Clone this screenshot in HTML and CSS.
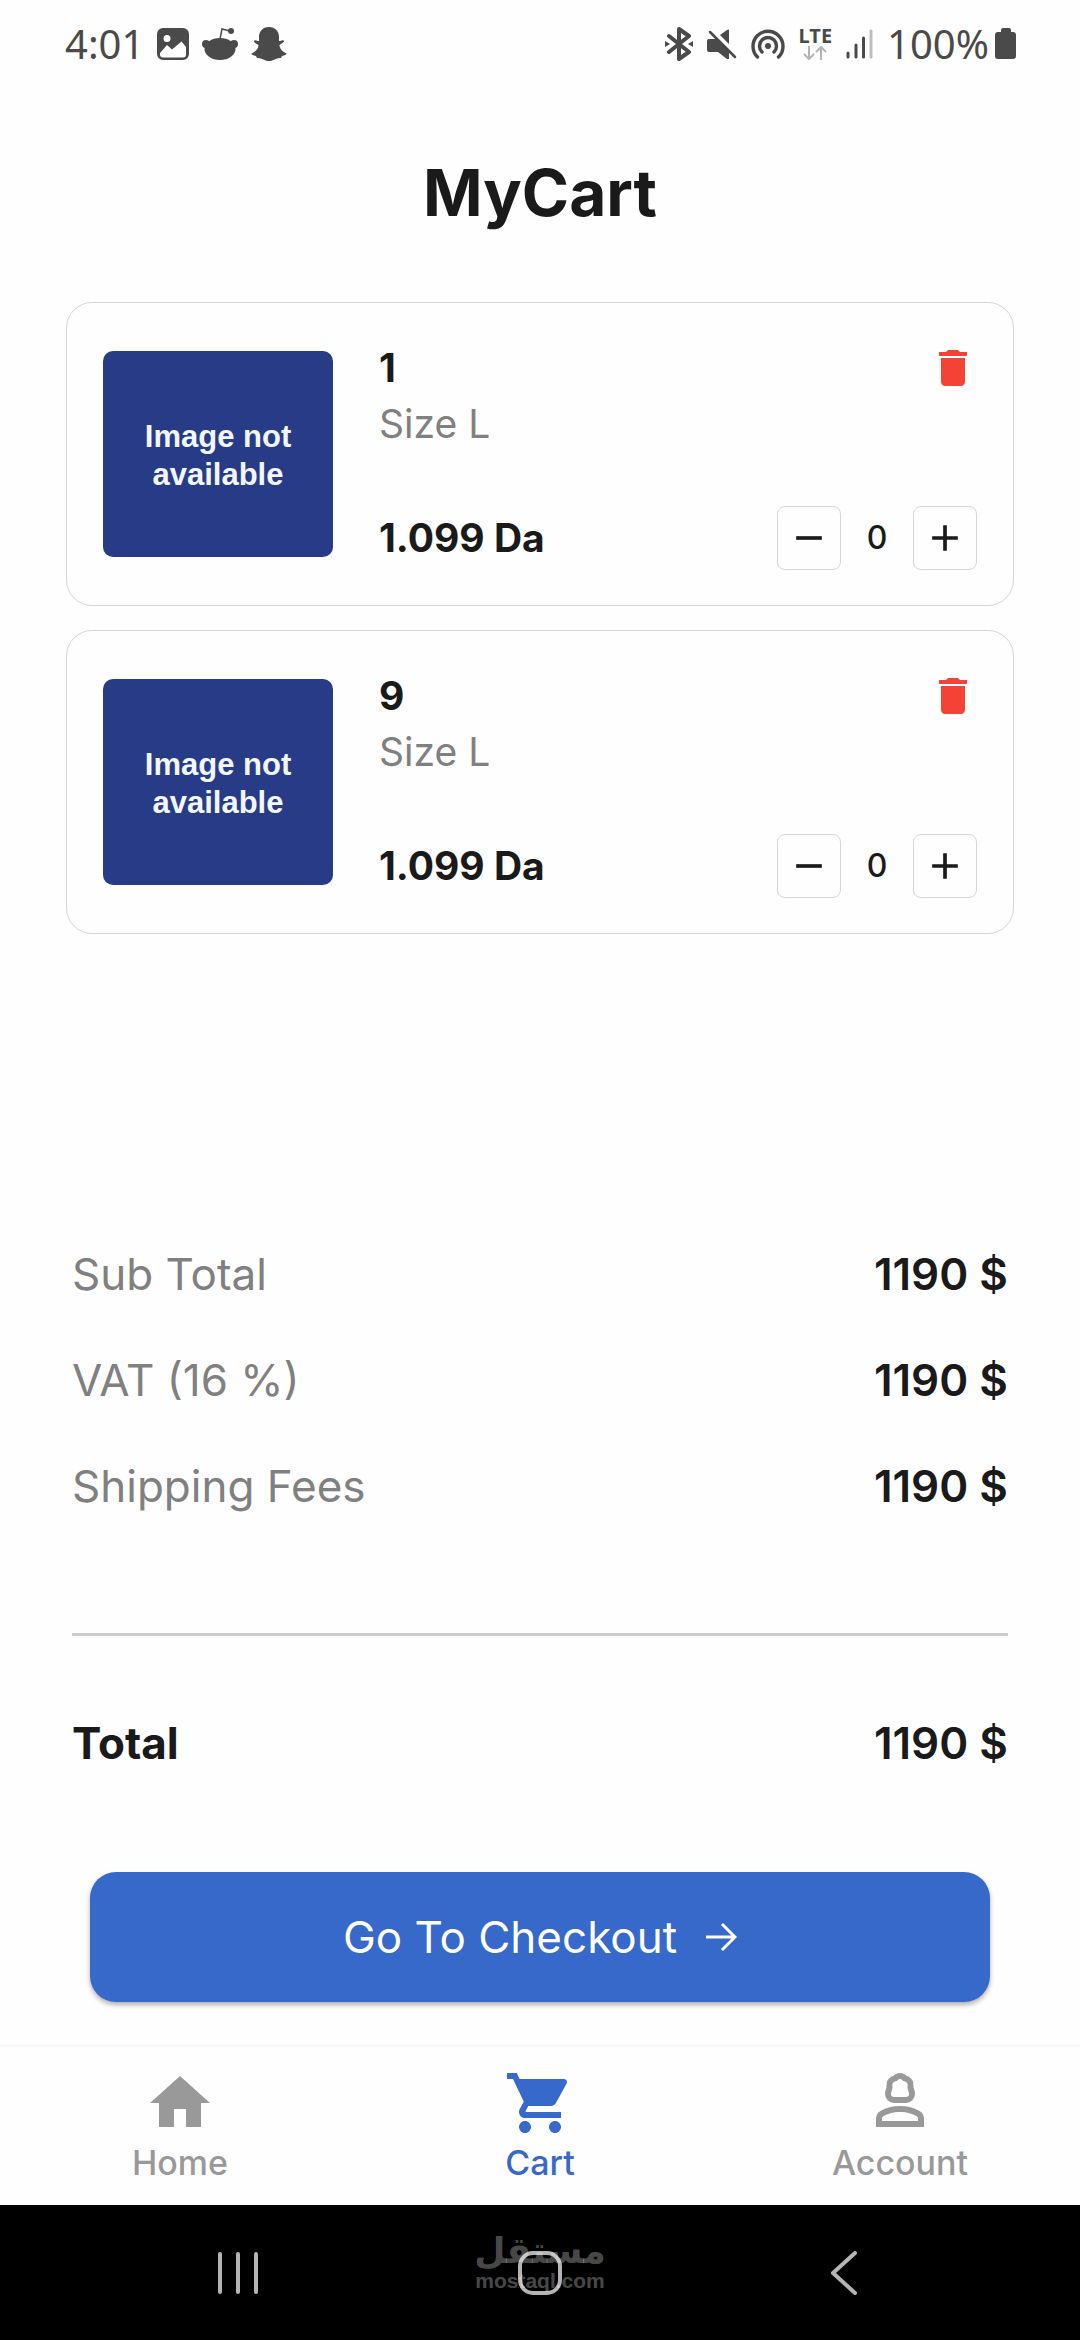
FILE: index.html
```html
<!DOCTYPE html>
<html lang="en">
<head>
<meta charset="utf-8">
<meta name="viewport" content="width=device-width, initial-scale=1">
<title>MyCart</title>
<link rel="stylesheet" href="styles.css">
</head>
<body>
<svg width="0" height="0" class="sprite" aria-hidden="true">
  <symbol id="trash" viewBox="0 0 24 24"><path d="M6 19c0 1.100.9 2 2 2h8c1.100 0 2-.9 2-2V7H6v12zM19 4h-3.500l-1-1h-5l-1 1H5v2h14V4z"/></symbol>
  <symbol id="minus" viewBox="0 0 24 24"><path d="M19 13H5v-2h14v2z"/></symbol>
  <symbol id="plus" viewBox="0 0 24 24"><path d="M19 13h-6v6h-2v-6H5v-2h6V5h2v6h6v2z"/></symbol>
</svg>

<div class="status">
  <div class="status-group status-left">
    <span class="status-text">4:01</span>
    <svg width="32" height="32" viewBox="0 0 32 32"><path fill="currentColor" fill-rule="evenodd" d="M6 0h20a6 6 0 0 1 6 6v20a6 6 0 0 1-6 6H6a6 6 0 0 1-6-6V6a6 6 0 0 1 6-6zM10 7a3.500 3.500 0 1 0 0 7a3.500 3.500 0 0 0 0-7zM3 25v1.500a3 3 0 0 0 3 3h20a3 3 0 0 0 3-3V19l-4.500-5.500L15 21.500 10 17z"/></svg>
    <svg width="36" height="34" viewBox="0 0 36 34"><g fill="currentColor"><ellipse cx="18" cy="22" rx="15.500" ry="11"/><circle cx="4" cy="17" r="4"/><circle cx="32" cy="17" r="4"/><circle cx="29" cy="4" r="3"/></g><path d="M18 12l2-10 8 2" fill="none" stroke="currentColor" stroke-width="1.500"/></svg>
    <svg width="36" height="36" viewBox="0 0 36 36"><path fill="currentColor" d="M18 1c6.500 0 10 4.500 10 10v4c1.500.3 3-1.500 4.500-.5 1.500 1.200-.5 2.500-4 4.500 0 4 3.500 7 7 8.500.8.700-1.500 2-4.500 2.500l-1 2c-5-.5-7 3-12 3s-7-3.500-12-3l-1-2c-3-.5-5.300-1.800-4.500-2.500 3.500-1.500 7-4.500 7-8.500-3.500-2-5.500-3.300-4-4.500 1.500-1 3 .8 4.500.5v-4c0-5.500 3.500-10 10-10z"/></svg>
  </div>
  <div class="status-group status-right">
    <svg width="28" height="34" viewBox="0 0 28 34"><path d="M4 9l20 16-10 7V2l10 7L4 25" fill="none" stroke="currentColor" stroke-width="4" stroke-linejoin="round" stroke-linecap="round"/><path fill="currentColor" d="M0 14l5 3-5 3zM28 14l-5 3 5 3z"/></svg>
    <svg width="30" height="30" viewBox="0 0 30 30"><path fill="currentColor" d="M2 10h7l13 13v7h-2l-9-7H2q-2 0-2-2v-9q0-2 2-2zM22 1v14l-9-9 7-5q2-1 2 0z"/><path d="M3 3l25 25" stroke="currentColor" stroke-width="2.500" stroke-linecap="round"/></svg>
    <svg width="34" height="32" viewBox="0 0 34 32"><g fill="none" stroke="currentColor" stroke-width="3.400" stroke-linecap="round"><path d="M6.500 29a15 15 0 1 1 21 0"/><path d="M11 24a8.500 8.500 0 1 1 12 0"/></g><circle cx="17" cy="18" r="3" fill="currentColor"/></svg>
    <div class="lte">
      <span class="lte-text">LTE</span>
      <svg width="24" height="14" viewBox="0 0 24 14"><path d="M6 0v12M1 8l5 5 5-5M18 14V2M13 6l5-5 5 5" fill="none" stroke="#b4b4b4" stroke-width="2"/></svg>
    </div>
    <svg width="27" height="30" viewBox="0 0 27 30"><g stroke="currentColor" stroke-width="3" stroke-linecap="round"><path d="M2 24v4M10 16v12M17.500 9v19"/><path stroke="#bcbcbc" d="M25 2v26"/></g></svg>
    <span class="status-text battery-text">100%</span>
    <svg width="21" height="32" viewBox="0 0 21 32"><path fill="currentColor" d="M8 0h6q2 0 2 2v2h2q3 0 3 3v21q0 3-3 3H3q-3 0-3-3V7q0-3 3-3h3V2q0-2 2-2z"/></svg>
  </div>
</div>

<h1 class="title">MyCart</h1>

<main class="main">
  <ul class="cart">
    <li class="card">
      <div class="thumb">Image not<br>available</div>
      <div class="info">
        <div class="info-row">
          <h2 class="name">1</h2>
          <button class="icon-btn" aria-label="Remove item 1"><svg class="trash"><use href="#trash"/></svg></button>
        </div>
        <p class="size">Size L</p>
        <div class="info-row info-bottom">
          <span class="price">1.099 Da</span>
          <div class="stepper">
            <button class="step" aria-label="Decrease"><svg class="glyph"><use href="#minus"/></svg></button>
            <span class="qty">0</span>
            <button class="step" aria-label="Increase"><svg class="glyph"><use href="#plus"/></svg></button>
          </div>
        </div>
      </div>
    </li>
    <li class="card">
      <div class="thumb">Image not<br>available</div>
      <div class="info">
        <div class="info-row">
          <h2 class="name">9</h2>
          <button class="icon-btn" aria-label="Remove item 9"><svg class="trash"><use href="#trash"/></svg></button>
        </div>
        <p class="size">Size L</p>
        <div class="info-row info-bottom">
          <span class="price">1.099 Da</span>
          <div class="stepper">
            <button class="step" aria-label="Decrease"><svg class="glyph"><use href="#minus"/></svg></button>
            <span class="qty">0</span>
            <button class="step" aria-label="Increase"><svg class="glyph"><use href="#plus"/></svg></button>
          </div>
        </div>
      </div>
    </li>
  </ul>

  <dl class="totals">
    <div class="line"><dt>Sub Total</dt><dd>1190 $</dd></div>
    <div class="line"><dt>VAT (16 %)</dt><dd>1190 $</dd></div>
    <div class="line"><dt>Shipping Fees</dt><dd>1190 $</dd></div>
    <div class="line grand"><dt>Total</dt><dd>1190 $</dd></div>
  </dl>

  <button class="checkout">Go To Checkout
    <svg width="32" height="32" viewBox="0 0 32 32"><path d="M1 16h29M17 3l13 13-13 13" fill="none" stroke="currentColor" stroke-width="3"/></svg>
  </button>
</main>

<nav class="tabs">
  <a class="tab" href="#home"><svg class="tab-icon" viewBox="0 0 24 24"><path d="M10 20v-6h4v6h5v-8h3L12 3 2 12h3v8z"/></svg>Home</a>
  <a class="tab active" href="#cart" aria-current="page"><svg class="tab-icon" viewBox="0 0 24 24"><path d="M7 18c-1.100 0-1.990.9-1.990 2S5.900 22 7 22s2-.9 2-2-.9-2-2-2zM1 2v2h2l3.600 7.590-1.350 2.450c-.16.280-.25.610-.25.960 0 1.100.9 2 2 2h12v-2H7.420c-.14 0-.25-.11-.25-.25l.030-.12.900-1.630h7.450c.75 0 1.410-.41 1.750-1.030l3.580-6.490c.080-.14.120-.31.120-.48 0-.55-.45-1-1-1H5.210l-.94-2H1zm16 16c-1.100 0-1.990.9-1.990 2s.89 2 1.990 2 2-.9 2-2-.9-2-2-2z"/></svg>Cart</a>
  <a class="tab" href="#account"><svg class="tab-icon" viewBox="0 0 24 24"><path fill="none" stroke="currentColor" stroke-width="2" d="M12 3c-.7 0-1.200.3-1.600.8-1.200.3-2.100 1.200-1.900 2.400 .2 1-.5 1.600-.5 2.800 0 1.100.9 2 2 2h4c1.100 0 2-.9 2-2 0-1.200-.7-1.800-.5-2.800.2-1.200-.7-2.100-1.900-2.400C13.200 3.300 12.700 3 12 3z"/><path d="M18.390 14.560C16.710 13.700 14.530 13 12 13s-4.710.7-6.390 1.560C4.610 15.070 4 16.100 4 17.220V20h16v-2.780c0-1.120-.61-2.150-1.610-2.660zM18 18H6v-.78c0-.38.2-.72.520-.88C7.710 15.730 9.630 15 12 15s4.290.73 5.480 1.340c.32.160.520.500.520.880V18z"/></svg>Account</a>
</nav>

<div class="system">
  <button class="sys-btn" aria-label="Recent apps"><svg width="44" height="44" viewBox="0 0 44 44"><path d="M4 3v38M22 3v38M40 3v38" stroke="currentColor" stroke-width="4" stroke-linecap="round"/></svg></button>
  <button class="sys-btn" aria-label="Home screen"><svg width="44" height="44" viewBox="0 0 44 44"><rect x="2" y="2" width="40" height="40" rx="13" fill="none" stroke="currentColor" stroke-width="4"/></svg></button>
  <button class="sys-btn" aria-label="Back"><svg width="44" height="44" viewBox="0 0 44 44"><path d="M35 2L13 22l22 20" fill="none" stroke="currentColor" stroke-width="4" stroke-linecap="round" stroke-linejoin="round"/></svg></button>
  <div class="mark"><span class="mark-ar" lang="ar" dir="rtl">مستقل</span><span class="mark-en">mostaql.com</span></div>
</div>
</body>
</html>
```
FILE: styles.css
```css
* { box-sizing: border-box; }

body {
  margin: 0;
  min-height: 100vh;
  display: flex;
  flex-direction: column;
  background: #fefefe;
  color: #1a1a1a;
  font-family: Inter, "Noto Sans", sans-serif;
}

button {
  padding: 0;
  border: 0;
  background: none;
  color: inherit;
  font: inherit;
}

svg { display: block; flex: none; }
.sprite { position: absolute; }
h1, h2, p, ul, dl, dd { margin: 0; padding: 0; }

/* Status bar */
.status {
  display: flex;
  justify-content: space-between;
  height: 88px;
  padding: 0 64px 0 65px;
  color: #4a4a4a;
}
.status-group { display: flex; align-items: center; }
.status-left { gap: 13px; }
.status-text {
  font: 400 40px/48px "Noto Sans", sans-serif;
}
.status-right { gap: 14px; }
.battery-text { margin-right: -8px; }
.lte {
  display: flex;
  flex-direction: column;
  align-items: center;
  gap: 2px;
}
.lte-text { font: 700 20px/16px "Noto Sans", sans-serif; }

.title {
  padding: 64px 0 68px;
  font-size: 64px;
  line-height: 82px;
  font-weight: 700;
  text-align: center;
}

.main {
  flex: 1;
  display: flex;
  flex-direction: column;
}

/* Cart items */
.cart {
  flex: 1;
  display: flex;
  flex-direction: column;
  gap: 24px;
  padding: 0 66px;
  list-style: none;
}
.card {
  display: flex;
  align-items: center;
  gap: 46px;
  padding: 35px 36px;
  border: 1px solid #d6d6d6;
  border-radius: 26px;
}
.thumb {
  display: grid;
  place-content: center;
  width: 230px;
  height: 206px;
  padding-top: 4px;
  border-radius: 10px;
  background: #273b87;
  color: #f2f6ff;
  font: 700 31px/38px "Liberation Sans", sans-serif;
  text-align: center;
}
.info {
  flex: 1;
  display: flex;
  flex-direction: column;
  min-height: 232px;
  padding-top: 2px;
}
.info-row {
  display: flex;
  justify-content: space-between;
  align-items: center;
}
.info-bottom { margin-top: auto; }
.name, .price {
  font-size: 39px;
  line-height: 56px;
  font-weight: 700;
}
.size {
  color: #808080;
  font-size: 39px;
  line-height: 56px;
}
.icon-btn { color: #f44336; }
.trash {
  width: 48px;
  height: 48px;
  fill: currentColor;
}
.stepper {
  display: flex;
  align-items: center;
}
.step {
  display: grid;
  place-content: center;
  width: 64px;
  height: 64px;
  border: 1px solid #d6d6d6;
  border-radius: 8px;
}
.glyph {
  width: 44px;
  height: 44px;
  fill: currentColor;
}
.qty {
  width: 72px;
  font-size: 32px;
  line-height: 40px;
  font-weight: 500;
  text-align: center;
}

/* Totals */
.totals {
  padding: 48px 72px 0;
  font-size: 44px;
}
.line {
  display: flex;
  justify-content: space-between;
  line-height: 50px;
  padding-bottom: 56px;
}
.line dt { color: #808080; }
.line dd { font-weight: 600; }
.grand {
  margin-top: 66px;
  padding: 82px 0 104px;
  border-top: 3px solid #cccccc;
}
.grand dt { color: #1a1a1a; font-weight: 700; }

.checkout {
  display: flex;
  justify-content: center;
  align-items: center;
  gap: 28px;
  min-height: 130px;
  margin: 0 90px 42px;
  border-radius: 26px;
  background: #3669c9;
  box-shadow: 0 3px 5px rgba(0, 0, 0, 0.3);
  color: #fefefe;
  font-size: 44px;
}

/* Bottom tabs */
.tabs {
  display: grid;
  grid-template-columns: repeat(3, 1fr);
  padding: 20px 0 22px;
  border-top: 3px solid #f9f9f9;
}
.tab {
  display: flex;
  flex-direction: column;
  align-items: center;
  gap: 4px;
  color: #999999;
  font-size: 34px;
  line-height: 40px;
  font-weight: 500;
  text-decoration: none;
}
.tab.active { color: #3669c9; }
.tab-icon {
  width: 72px;
  height: 72px;
  fill: currentColor;
}

/* System navigation */
.system {
  position: relative;
  display: grid;
  grid-template-columns: repeat(3, 1fr);
  height: 135px;
  padding: 0 87px;
  overflow: hidden;
  background: #000000;
  color: #b4b4b4;
}
.sys-btn {
  display: grid;
  place-content: center;
}
.mark {
  position: absolute;
  inset: 0;
  display: flex;
  flex-direction: column;
  align-items: center;
  justify-content: center;
  padding-bottom: 20px;
  color: rgba(255, 255, 255, 0.3);
  pointer-events: none;
}
.mark-ar { font: 700 36px/36px "DejaVu Sans", sans-serif; }
.mark-en { font: 700 21px/24px "Liberation Sans", sans-serif; }
```
